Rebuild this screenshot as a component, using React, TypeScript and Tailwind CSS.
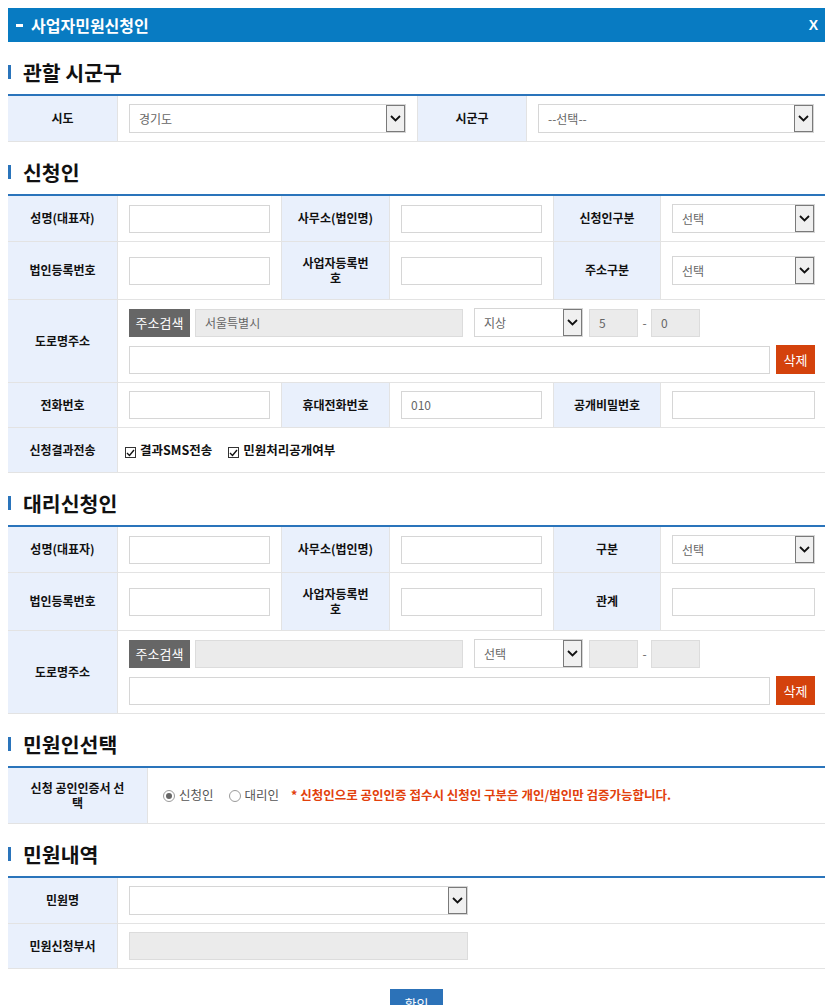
import React from 'react';

const Chevron = () => (
  <svg width="11" height="7" viewBox="0 0 11 7" fill="none">
    <path d="M1 1l4.5 4.5L10 1" stroke="#111" strokeWidth="1.8" />
  </svg>
);

const Select: React.FC<{ value?: string; className?: string }> = ({ value, className = '' }) => (
  <div className={`flex h-[29px] items-stretch border border-[#d6d6d6] bg-white ${className}`}>
    <span className="flex flex-1 items-center pl-[9px] text-[12px] text-[#666]">{value}</span>
    <span className="flex w-[19px] items-center justify-center border border-[#7a7a7a] bg-[#f0f0f0]">
      <Chevron />
    </span>
  </div>
);

const TextBox: React.FC<{ value?: string; className?: string; gray?: boolean }> = ({ value, className = '', gray }) => (
  <div
    className={`flex h-[28px] items-center border px-[9px] text-[12px] text-[#666] ${
      gray ? 'border-[#dcdcdc] bg-[#ebebeb]' : 'border-[#d6d6d6] bg-white'
    } ${className}`}
  >
    {value}
  </div>
);

const SectionTitle: React.FC<{ children: React.ReactNode }> = ({ children }) => (
  <h2 className="mt-[18px] mb-[10px] flex h-[24px] items-center">
    <span className="mr-[12px] h-[14px] w-[3px] bg-[#2a74bb]" />
    <span className="text-[20.5px] font-bold leading-[24px] text-[#111]">{children}</span>
  </h2>
);

const Label: React.FC<{ children: React.ReactNode; first?: boolean; pad?: string }> = ({
  children,
  first,
  pad = 'px-[15px] py-[14px]',
}) => (
  <div
    className={`flex items-center justify-center break-all border-b border-r border-[#e3e3e3] bg-[#e9f0fc] text-center text-[12px] font-bold leading-[14.5px] text-[#111] ${pad} ${
      first ? '' : 'border-l'
    }`}
  >
    {children}
  </div>
);

const Cell: React.FC<{ children?: React.ReactNode; className?: string }> = ({ children, className = '' }) => (
  <div className={`flex min-h-[45px] items-center border-b border-[#e3e3e3] px-[11px] py-[8px] ${className}`}>{children}</div>
);

const Check: React.FC<{ label: string }> = ({ label }) => (
  <label className="flex items-center gap-[4px]">
    <span className="mt-[5px] flex h-[11px] w-[11px] items-center justify-center border border-[#333] bg-white">
      <svg width="9" height="8" viewBox="0 0 9 8" fill="none">
        <path d="M1 4l2.5 2.5L8 1" stroke="#111" strokeWidth="1.4" />
      </svg>
    </span>
    <span className="text-[12.5px] font-bold text-[#111]">{label}</span>
  </label>
);

const Radio: React.FC<{ label: string; checked?: boolean }> = ({ label, checked }) => (
  <label className="flex items-center gap-[4px]">
    <span className="flex h-[12px] w-[12px] items-center justify-center rounded-full border border-[#9a9a9a] bg-white">
      {checked && <span className="h-[6px] w-[6px] rounded-full bg-[#666]" />}
    </span>
    <span className="text-[12.5px] text-[#555]">{label}</span>
  </label>
);

const AddressRow: React.FC<{ addr?: string; kind: string; n1?: string; n2?: string }> = ({ addr, kind, n1, n2 }) => (
  <div className="flex flex-col gap-[8px]">
    <div className="flex items-center">
      <button className="h-[28px] w-[61px] bg-[#666] text-[13px] text-white">주소검색</button>
      <TextBox gray value={addr} className="ml-[5px] w-[268px] px-[5px]" />
      <Select value={kind} className="ml-[11px] w-[109px]" />
      <TextBox gray value={n1} className="ml-[6px] w-[49px] px-[5px]" />
      <span className="w-[13px] text-center text-[12px] text-[#666]">-</span>
      <TextBox gray value={n2} className="w-[49px] px-[5px]" />
    </div>
    <div className="flex items-center">
      <TextBox className="w-[641px]" />
      <button className="ml-[6px] h-[29px] w-[39px] bg-[#d4420c] text-[13px] text-white">삭제</button>
    </div>
  </div>
);

export default function App() {
  return (
    <div className="w-[833px] bg-white px-2 pt-2 pb-6 font-['Noto_Sans_CJK_KR','Noto_Sans',sans-serif] text-[#111]">
      <header className="flex h-[34px] items-center justify-between bg-[#087bc2] pl-[8px] pr-[7px] text-white">
        <div className="flex items-center gap-[8px]">
          <span className="h-[3px] w-[7px] bg-white" />
          <span className="text-[16px] font-bold leading-none">사업자민원신청인</span>
        </div>
        <span className="font-['Liberation_Sans',sans-serif] text-[14px] font-bold">X</span>
      </header>

      <SectionTitle>관할 시군구</SectionTitle>
      <div className="grid grid-cols-[110px_299px_110px_298px] border-t-2 border-[#2a74bb]">
        <Label first>시도</Label>
        <Cell>
          <Select value="경기도" className="w-full" />
        </Cell>
        <Label>시군구</Label>
        <Cell>
          <Select value="--선택--" className="w-full" />
        </Cell>
      </div>

      <SectionTitle>신청인</SectionTitle>
      <div className="grid grid-cols-[110px_163px_109px_163px_108px_164px] border-t-2 border-[#2a74bb]">
        <Label first>성명(대표자)</Label>
        <Cell>
          <TextBox className="w-full" />
        </Cell>
        <Label>사무소(법인명)</Label>
        <Cell>
          <TextBox className="w-full" />
        </Cell>
        <Label>신청인구분</Label>
        <Cell className="pr-[10px]">
          <Select value="선택" className="w-full" />
        </Cell>

        <Label first>법인등록번호</Label>
        <Cell>
          <TextBox className="w-full" />
        </Cell>
        <Label>사업자등록번호</Label>
        <Cell>
          <TextBox className="w-full" />
        </Cell>
        <Label>주소구분</Label>
        <Cell className="pr-[10px]">
          <Select value="선택" className="w-full" />
        </Cell>

        <Label first>도로명주소</Label>
        <Cell className="col-span-5">
          <AddressRow addr="서울특별시" kind="지상" n1="5" n2="0" />
        </Cell>

        <Label first>전화번호</Label>
        <Cell>
          <TextBox className="w-full" />
        </Cell>
        <Label>휴대전화번호</Label>
        <Cell>
          <TextBox value="010" className="w-full" />
        </Cell>
        <Label>공개비밀번호</Label>
        <Cell className="pr-[10px]">
          <TextBox className="w-full" />
        </Cell>

        <Label first>신청결과전송</Label>
        <Cell className="col-span-5 min-h-[44px] gap-[16px] pl-[7px]">
          <Check label="결과SMS전송" />
          <Check label="민원처리공개여부" />
        </Cell>
      </div>

      <SectionTitle>대리신청인</SectionTitle>
      <div className="grid grid-cols-[110px_163px_109px_163px_108px_164px] border-t-2 border-[#2a74bb]">
        <Label first>성명(대표자)</Label>
        <Cell>
          <TextBox className="w-full" />
        </Cell>
        <Label>사무소(법인명)</Label>
        <Cell>
          <TextBox className="w-full" />
        </Cell>
        <Label>구분</Label>
        <Cell className="pr-[10px]">
          <Select value="선택" className="w-full" />
        </Cell>

        <Label first>법인등록번호</Label>
        <Cell>
          <TextBox className="w-full" />
        </Cell>
        <Label>사업자등록번호</Label>
        <Cell>
          <TextBox className="w-full" />
        </Cell>
        <Label>관계</Label>
        <Cell className="pr-[10px]">
          <TextBox className="w-full" />
        </Cell>

        <Label first>도로명주소</Label>
        <Cell className="col-span-5">
          <AddressRow kind="선택" />
        </Cell>
      </div>

      <SectionTitle>민원인선택</SectionTitle>
      <div className="grid grid-cols-[140px_677px] border-t-2 border-[#2a74bb]">
        <Label first pad="px-[20px] py-[13px]">신청 공인인증서 선택</Label>
        <Cell className="gap-[15px] pl-[15px]">
          <Radio label="신청인" checked />
          <Radio label="대리인" />
          <span className="-ml-[3px] text-[12.5px] font-bold text-[#e2400c]">
            * 신청인으로 공인인증 접수시 신청인 구분은 개인/법인만 검증가능합니다.
          </span>
        </Cell>
      </div>

      <SectionTitle>민원내역</SectionTitle>
      <div className="grid grid-cols-[110px_707px] border-t-2 border-[#2a74bb]">
        <Label first>민원명</Label>
        <Cell className="min-h-[44px] py-[7px]">
          <Select className="w-[339px]" />
        </Cell>
        <Label first>민원신청부서</Label>
        <Cell className="min-h-[44px] py-[7px]">
          <TextBox gray className="w-[339px]" />
        </Cell>
      </div>

      <div className="mt-[20px] flex justify-center">
        <button className="h-[30px] w-[53px] bg-[#2c72b8] text-[13px] text-white">확인</button>
      </div>
    </div>
  );
}
